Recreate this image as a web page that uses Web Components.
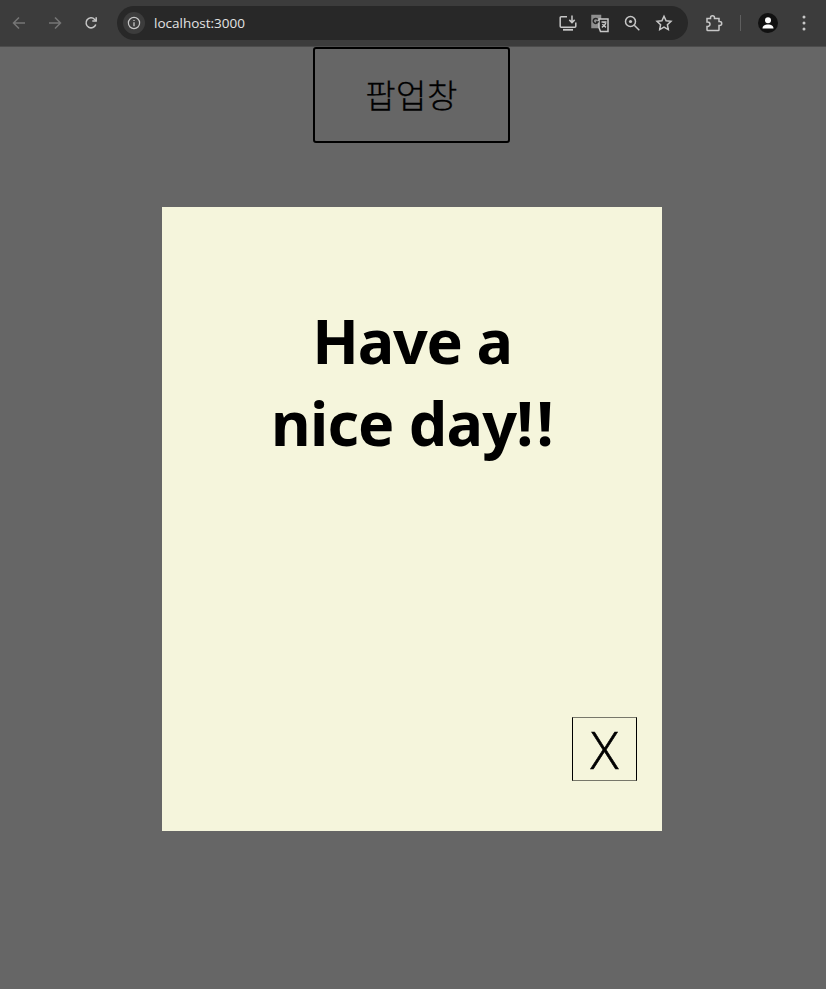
<!DOCTYPE html>
<html lang="ko">
<head>
<meta charset="utf-8">
<title>localhost:3000</title>
<style>
html, body { margin: 0; padding: 0; height: 100%; background: #666666; overflow: hidden; }
body { display: flex; flex-direction: column; font-family: "Noto Sans", "Noto Sans CJK KR", sans-serif; }
.line-one { letter-spacing: -1.2px; }
.line-two { letter-spacing: -.8px; }
.bang { letter-spacing: 3px; }
</style>
</head>
<body>
<browser-bar url="localhost:3000"></browser-bar>
<popup-page>
  <popup-opener slot="opener">팝업창</popup-opener>
  <popup-card>
    <span class="line-one">Have a</span><br><span class="line-two">nice day<span class="bang">!</span>!</span>
    <close-button slot="close">X</close-button>
  </popup-card>
</popup-page>

<script>
const barTemplate = document.createElement("template");
barTemplate.innerHTML = `
<style>
:host { display: flex; align-items: center; height: 47px; box-sizing: border-box; background: #3c3c3c; border-bottom: 1px solid #4c4c4c; flex: none; }
svg { display: block; fill: none; stroke: currentColor; stroke-width: 1.5; }
.nav { display: flex; align-items: center; gap: 14px; padding-left: 8px; color: #c7c7c7; }
.slot { width: 22px; height: 22px; display: flex; align-items: center; justify-content: center; }
.dim { color: #767676; }
.omni { display: flex; align-items: center; width: 571px; height: 34px; box-sizing: border-box; margin-left: 15px; padding: 0 13px 0 6px; border-radius: 17px; background: #282828; color: #c7c7c7; }
.info { width: 22px; height: 22px; border-radius: 50%; background: #3c3c3c; display: flex; align-items: center; justify-content: center; flex: none; }
.url { margin-left: 9px; flex: 1; font: 13.5px "Open Sans", sans-serif; color: #e3e3e3; }
.tools { display: flex; align-items: center; gap: 10px; }
.right { display: flex; align-items: center; color: #c7c7c7; }
.sep { width: 1px; height: 16px; background: #5f5f5f; margin: 0 17px 0 15px; }
.avatar { width: 20px; height: 20px; border-radius: 50%; background: #111; display: flex; align-items: center; justify-content: center; }
</style>
<div class="nav">
  <div class="slot dim"><svg width="16" height="16" viewBox="0 0 16 16"><path d="M14 8H2.500M8 2.500 2.500 8 8 13.500"/></svg></div>
  <div class="slot dim"><svg width="16" height="16" viewBox="0 0 16 16"><path d="M2 8h11.500M8 2.500 13.500 8 8 13.500"/></svg></div>
  <div class="slot"><svg width="16" height="16" viewBox="0 0 16 16"><path d="M12.800 9.500A5 5 0 1 1 11.700 4.400L13 5.800"/><path d="M13.200 2.200v3.900H9.300"/></svg></div>
</div>
<div class="omni">
  <div class="info"><svg width="14" height="14" viewBox="0 0 14 14"><circle cx="7" cy="7" r="5.600" stroke-width="1.200"/><path d="M7 6.200v4M7 3.900v1.200" stroke-width="1.300"/></svg></div>
  <span class="url"><slot></slot></span>
  <div class="tools">
    <div class="slot"><svg width="20" height="20" viewBox="0 0 20 20" stroke-width="1.400"><path d="M9 3.700H3.200a1 1 0 0 0-1 1v8.600a1 1 0 0 0 1 1h13.600a1 1 0 0 0 1-1V9.500"/><path d="M5 16.800h10" stroke-width="1.800"/><path d="M14 2.500v7M11.300 6.900 14 9.600 16.700 6.900"/></svg></div>
    <div class="slot"><svg width="20" height="20" viewBox="0 0 20 20" stroke-width="1.200"><path d="M2 2.500h8.500v12H2z" fill="#8f8f8f" stroke="#8f8f8f"/><path d="M9 6h9v12.500H10.500L9 14.500z" fill="#282828"/><path d="M11.500 9h5M14 9v1M15.800 10c-.6 2-2 3.500-4 4.400M12.500 11c.7 1.400 2 2.600 3.500 3.300"/><path d="M7.800 6.500A2.500 2.500 0 1 0 8 9H6" stroke="#282828"/></svg></div>
    <div class="slot"><svg width="18" height="18" viewBox="0 0 18 18"><circle cx="7.500" cy="7.500" r="5"/><path d="m11.300 11.300 5 5"/><circle cx="7.500" cy="7.500" r="1.600" fill="currentColor" stroke="none"/></svg></div>
    <div class="slot"><svg width="18" height="18" viewBox="0 0 18 18"><path d="m9 2.200 2.100 4.500 4.900.6-3.600 3.400.9 4.900L9 13.200l-4.300 2.400.9-4.900L2 7.300l4.900-.6z"/></svg></div>
  </div>
</div>
<div class="right">
  <div class="slot" style="margin-left:15px"><svg width="20" height="20" viewBox="0 0 20 20"><path d="M3 5.500h3.500V4.700a2 2 0 0 1 4 0v.8h4.500v3h.7a2 2 0 0 1 0 4H15v4.200a.8.8 0 0 1-.8.8H3.800a.8.8 0 0 1-.8-.8v-3.200h.7a2.300 2.300 0 0 0 0-4.600H3z"/></svg></div>
  <div class="sep"></div>
  <div class="avatar"><svg width="14" height="14" viewBox="0 0 14 14" style="fill:#fff;stroke:none"><circle cx="7" cy="4.300" r="3"/><path d="M1.500 12.500c0-2.800 2.500-4 5.500-4s5.500 1.200 5.500 4z"/></svg></div>
  <div class="slot" style="margin-left:24px;width:4px"><svg width="4" height="16" viewBox="0 0 4 16" style="fill:currentColor;stroke:none"><circle cx="2" cy="2" r="1.500"/><circle cx="2" cy="8" r="1.500"/><circle cx="2" cy="14" r="1.500"/></svg></div>
</div>`;

class BrowserBar extends HTMLElement {
  constructor() {
    super();
    const shadowRoot = this.attachShadow({ mode: "open" });
    shadowRoot.appendChild(barTemplate.content.cloneNode(true));
    shadowRoot.querySelector(".url").textContent = this.getAttribute("url");
  }
}

const pageTemplate = document.createElement("template");
pageTemplate.innerHTML = `
<style>
:host { display: flex; flex-direction: column; align-items: center; flex: 1; background: #666666; padding-right: 2px; }
.opener { margin-right: 1px; }
.card-wrap { margin-top: 64px; }
</style>
<div class="opener"><slot name="opener"></slot></div>
<div class="card-wrap"><slot></slot></div>`;

class PopupPage extends HTMLElement {
  constructor() {
    super();
    this.attachShadow({ mode: "open" }).appendChild(pageTemplate.content.cloneNode(true));
  }
}

const openerTemplate = document.createElement("template");
openerTemplate.innerHTML = `
<style>
:host { display: flex; align-items: center; justify-content: center; width: 197px; height: 96px; box-sizing: border-box; border: 2px solid #000; border-radius: 3px; padding-bottom: 3px; font-family: "Noto Sans CJK KR", sans-serif; font-size: 33px; font-weight: 300; letter-spacing: .4px; -webkit-text-stroke: .3px #000; color: #000; }
</style>
<slot></slot>`;

class PopupOpener extends HTMLElement {
  constructor() {
    super();
    this.attachShadow({ mode: "open" }).appendChild(openerTemplate.content.cloneNode(true));
  }
}

const cardTemplate = document.createElement("template");
cardTemplate.innerHTML = `
<style>
:host { display: flex; flex-direction: column; width: 500px; height: 624px; box-sizing: border-box; background: #f5f5dc; padding: 93px 25px 50px 0; }
.msg { flex: 1; padding-left: 25px; text-align: center; font-family: "Noto Sans", sans-serif; font-size: 61px; font-weight: 700; line-height: 82px; color: #000; }
.foot { display: flex; justify-content: flex-end; }
</style>
<div class="msg"><slot></slot></div>
<div class="foot"><slot name="close"></slot></div>`;

class PopupCard extends HTMLElement {
  constructor() {
    super();
    this.attachShadow({ mode: "open" }).appendChild(cardTemplate.content.cloneNode(true));
  }
}

const closeTemplate = document.createElement("template");
closeTemplate.innerHTML = `
<style>
:host { display: flex; align-items: center; justify-content: center; width: 65px; height: 64px; margin-top: -1px; box-sizing: border-box; border: 1px solid #000; border-top-color: #77776a; border-bottom-color: #77776a; font-family: "Open Sans", sans-serif; font-size: 52px; font-weight: 300; line-height: 1; -webkit-text-stroke: .6px #000; color: #000; }
</style>
<slot></slot>`;

class CloseButton extends HTMLElement {
  constructor() {
    super();
    this.attachShadow({ mode: "open" }).appendChild(closeTemplate.content.cloneNode(true));
  }
}

customElements.define("browser-bar", BrowserBar);
customElements.define("popup-page", PopupPage);
customElements.define("popup-opener", PopupOpener);
customElements.define("popup-card", PopupCard);
customElements.define("close-button", CloseButton);
</script>
</body>
</html>
